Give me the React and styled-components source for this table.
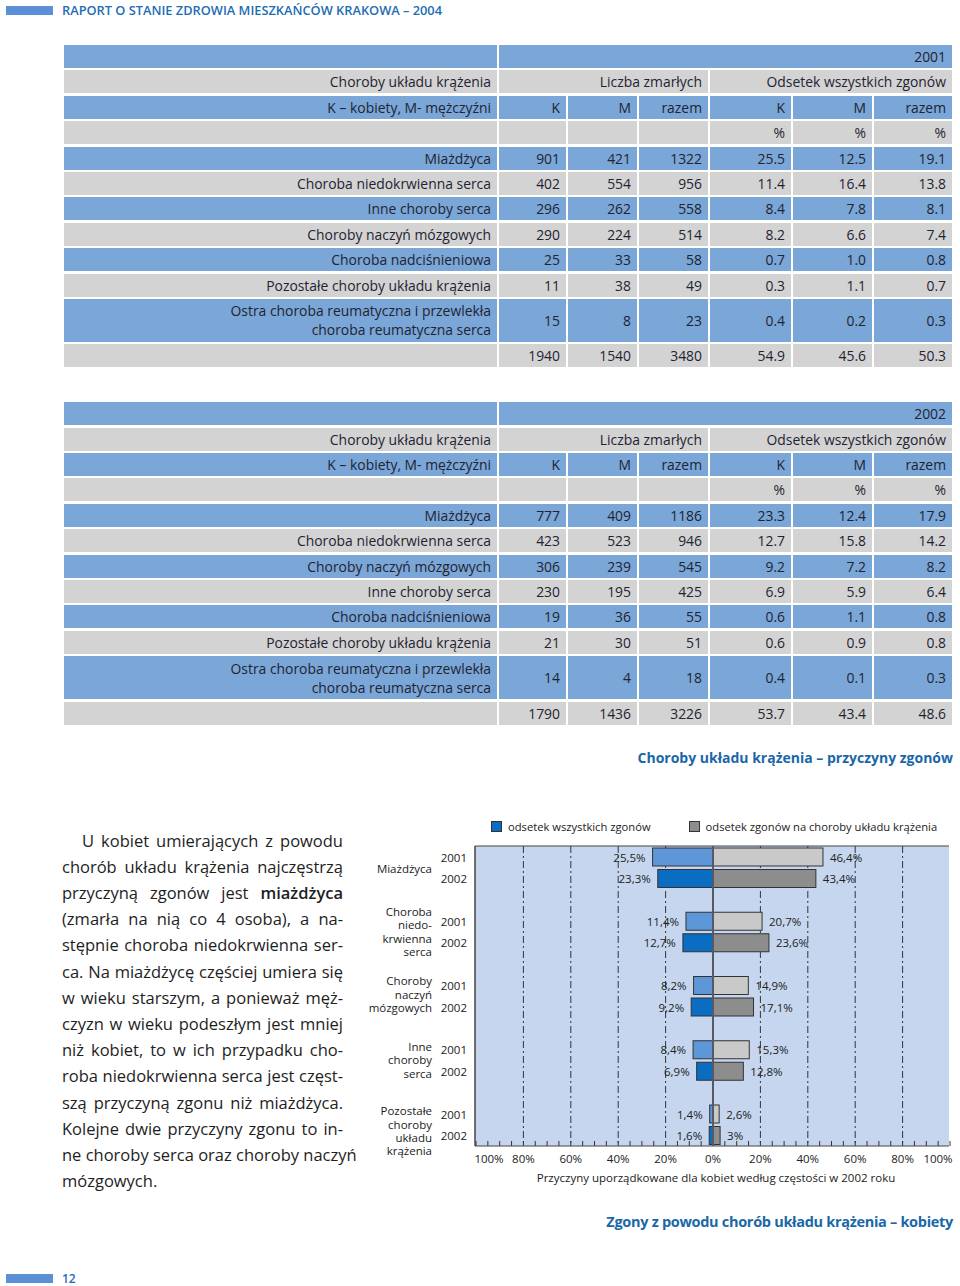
import React from "react";
import styled, { createGlobalStyle } from "styled-components";

const Global = createGlobalStyle`
  html, body { margin: 0; padding: 0; background: #fff; }
  body { font-family: "Open Sans", "Noto Sans", sans-serif; color: #222; }
`;

const Page = styled.div`
  width: 960px;
  height: 1286px;
  overflow: hidden;
  position: relative;
`;

const TopBar = styled.header`
  display: flex;
  align-items: center;
  height: 20px;
  gap: 9px;
  padding-left: 6px;
`;

const Stripe = styled.span`
  display: block;
  width: 47px;
  height: 9px;
  background: #5b8fd6;
`;

const TopTitle = styled.span`
  font-size: 12.8px;
  font-weight: 600;
  color: #1d6db3;
`;

const Grid = styled.div`
  display: grid;
  grid-template-columns: 433px 67px 69px 69px 81px 79px 78px;
  column-gap: 2px;
  row-gap: 2.4px;
  margin-left: 64px;
  width: 888px;
  margin-top: ${(p) => p.$top}px;
`;

const Cell = styled.div`
  background: ${(p) => (p.$tone === "blue" ? "#7ba6d8" : "#d3d3d4")};
  grid-column: ${(p) => (p.$span ? `span ${p.$span}` : "auto")};
  height: ${(p) => (p.$tall ? 43 : 23)}px;
  display: flex;
  align-items: center;
  justify-content: flex-end;
  text-align: right;
  padding-right: 6px;
  box-sizing: border-box;
  font-size: 13.9px;
  line-height: 19px;
  color: #1e2430;
  white-space: nowrap;
`;

const Caption = styled.div`
  text-align: right;
  width: 953px;
  font-size: 14px;
  font-weight: 700;
  color: #1a67a8;
  line-height: 20px;
  margin-top: ${(p) => p.$top}px;
`;

const FooterCaption = styled(Caption)`
  font-family: "Liberation Sans Narrow", "Open Sans", sans-serif;
  letter-spacing: -0.3px;
  font-size: 14.5px;
`;

const ChartSection = styled.section`
  display: flex;
  margin-top: 50px;
  height: 382px;
`;

const TextColumn = styled.div`
  margin-left: 62px;
  width: 281px;
  padding-top: 10px;
  font-size: 16.5px;
  line-height: 26.2px;
  color: #1e1e1e;
`;

const Line = styled.span`
  display: block;
  white-space: nowrap;
  text-align: ${(p) => (p.$last ? "left" : "justify")};
  text-align-last: ${(p) => (p.$last ? "left" : "justify")};
  padding-left: ${(p) => (p.$indent ? 20 : 0)}px;
  b { font-weight: 600; }
`;

const ChartColumn = styled.div`
  margin-left: 17px;
  width: 600px;
  display: flex;
  flex-direction: column;
`;

const Legend = styled.div`
  display: flex;
  align-items: center;
  height: 18px;
  padding-left: 131px;
  font-size: 11.2px;
  color: #222;
`;

const LegendItem = styled.div`
  display: flex;
  align-items: center;
  gap: 6px;
  margin-right: ${(p) => p.$gap || 0}px;
`;

const Swatch = styled.span`
  width: 9px;
  height: 9px;
  border: 1px solid #333;
  background: ${(p) => p.$color};
`;

const ChartSvg = styled.svg`
  display: block;
  font-family: "Open Sans", "Noto Sans", sans-serif;
`;

const AxisCaption = styled.div`
  margin-top: 4px;
  padding-left: 112px;
  text-align: center;
  font-size: 11.5px;
  line-height: 16px;
  color: #222;
`;

const PageFoot = styled.footer`
  display: flex;
  align-items: center;
  gap: 9px;
  padding-left: 6px;
  margin-top: 40px;
`;

const PageNum = styled.span`
  font-size: 12px;
  line-height: 14px;
  font-weight: 600;
  color: #1d6db3;
`;

const t1 = [
  ["Miażdżyca", "901", "421", "1322", "25.5", "12.5", "19.1"],
  ["Choroba niedokrwienna serca", "402", "554", "956", "11.4", "16.4", "13.8"],
  ["Inne choroby serca", "296", "262", "558", "8.4", "7.8", "8.1"],
  ["Choroby naczyń mózgowych", "290", "224", "514", "8.2", "6.6", "7.4"],
  ["Choroba nadciśnieniowa", "25", "33", "58", "0.7", "1.0", "0.8"],
  ["Pozostałe choroby układu krążenia", "11", "38", "49", "0.3", "1.1", "0.7"],
  ["OSTRA", "15", "8", "23", "0.4", "0.2", "0.3"],
  ["", "1940", "1540", "3480", "54.9", "45.6", "50.3"],
];
const t2 = [
  ["Miażdżyca", "777", "409", "1186", "23.3", "12.4", "17.9"],
  ["Choroba niedokrwienna serca", "423", "523", "946", "12.7", "15.8", "14.2"],
  ["Choroby naczyń mózgowych", "306", "239", "545", "9.2", "7.2", "8.2"],
  ["Inne choroby serca", "230", "195", "425", "6.9", "5.9", "6.4"],
  ["Choroba nadciśnieniowa", "19", "36", "55", "0.6", "1.1", "0.8"],
  ["Pozostałe choroby układu krążenia", "21", "30", "51", "0.6", "0.9", "0.8"],
  ["OSTRA", "14", "4", "18", "0.4", "0.1", "0.3"],
  ["", "1790", "1436", "3226", "53.7", "43.4", "48.6"],
];

function DataTable({ year, rows, top }) {
  const tone = (i) => (i % 2 === 0 ? "blue" : "gray");
  return (
    <Grid $top={top}>
      <Cell $tone="blue" />
      <Cell $tone="blue" $span={6}>{year}</Cell>

      <Cell $tone="gray">Choroby układu krążenia</Cell>
      <Cell $tone="gray" $span={3}>Liczba zmarłych</Cell>
      <Cell $tone="gray" $span={3}>Odsetek wszystkich zgonów</Cell>

      {["K – kobiety, M- mężczyźni", "K", "M", "razem", "K", "M", "razem"].map((v, i) => (
        <Cell key={"h" + i} $tone="blue">{v}</Cell>
      ))}
      {["", "", "", "", "%", "%", "%"].map((v, i) => (
        <Cell key={"p" + i} $tone="gray">{v}</Cell>
      ))}
      {rows.map((r, ri) =>
        r.map((v, ci) => {
          const tall = r[0] === "OSTRA";
          return (
            <Cell key={ri + "-" + ci} $tone={tone(ri)} $tall={tall}>
              {v === "OSTRA" ? (
                <span>
                  Ostra choroba reumatyczna i przewlekła
                  <br />
                  choroba reumatyczna serca
                </span>
              ) : (
                v
              )}
            </Cell>
          );
        })
      )}
    </Grid>
  );
}

const X0 = 353;
const S = 2.37;
const px = (v) => X0 + v * S;

const groups = [
  { label: ["Miażdżyca"], ly: [32], a: [25.5, 23.3], b: [46.4, 43.4] },
  { label: ["Choroba", "niedo-", "krwienna", "serca"], ly: [75, 88.5, 102, 115.5], a: [11.4, 12.7], b: [20.7, 23.6] },
  { label: ["Choroby", "naczyń", "mózgowych"], ly: [144, 158, 171], a: [8.2, 9.2], b: [14.9, 17.1] },
  { label: ["Inne", "choroby", "serca"], ly: [210, 223.5, 237], a: [8.4, 6.9], b: [15.3, 12.8] },
  { label: ["Pozostałe", "choroby", "układu", "krążenia"], ly: [274, 288, 301, 314], a: [1.4, 1.6], b: [2.6, 3] },
];

const fmt = (v) => String(v).replace(".", ",") + "%";

function Chart() {
  const ticks = [];
  for (let v = -100; v <= 100; v += 5) ticks.push(v);
  const grids = [-80, -60, -40, -20, 20, 40, 60, 80];
  const axis = [
    [-100, "100%", 129],
    [-80, "80%"],
    [-60, "60%"],
    [-40, "40%"],
    [-20, "20%"],
    [0, "0%"],
    [20, "20%"],
    [40, "40%"],
    [60, "60%"],
    [80, "80%"],
    [100, "100%", 578],
  ];
  const leftFill = ["#5e97d8", "#0b6dc1"];
  const rightFill = ["#c9c9c9", "#8d8d8d"];
  return (
    <ChartSvg width="600" height="330" viewBox="0 0 600 330">
      <rect x={115} y={10} width={474} height={300} fill="#c6d6ef" />
      {grids.map((g) => (
        <line key={g} x1={px(g)} x2={px(g)} y1={10} y2={310} stroke="#2f3440" strokeWidth="1" strokeDasharray="7 3 2 3" />
      ))}
      {ticks.map((v) => (
        <line key={"t" + v} x1={px(v)} x2={px(v)} y1={310} y2={305} stroke="#333" strokeWidth="1" />
      ))}
      <line x1={115} x2={589} y1={10} y2={10} stroke="#444" strokeWidth="1.2" />
      <line x1={115} x2={589} y1={310} y2={310} stroke="#444" strokeWidth="1.2" />
      <line x1={115} x2={115} y1={10} y2={310} stroke="#444" strokeWidth="1.5" />
      {groups.map((g, gi) => {
        const c0 = 21 + gi * 64.25;
        return (
          <g key={gi}>
            {g.label.map((l, li) => (
              <text key={li} x={72} y={g.ly[li]} textAnchor="end" dominantBaseline="central" fontSize="11.5" fill="#222">
                {l}
              </text>
            ))}
            {[0, 1].map((k) => {
              const c = c0 + k * 21.5;
              const a = g.a[k];
              const b = g.b[k];
              return (
                <g key={k}>
                  <text x={107} y={c} textAnchor="end" dominantBaseline="central" fontSize="11.5" fill="#222">
                    {k === 0 ? "2001" : "2002"}
                  </text>
                  <rect x={px(-a)} y={c - 9} width={a * S} height={18} fill={leftFill[k]} stroke="#333" strokeWidth="1" />
                  <rect x={X0} y={c - 9} width={b * S} height={18} fill={rightFill[k]} stroke="#333" strokeWidth="1" />
                  <text x={px(-a) - 7} y={c} textAnchor="end" dominantBaseline="central" fontSize="11.5" fill="#222">
                    {fmt(a)}
                  </text>
                  <text x={px(b) + 7} y={c} textAnchor="start" dominantBaseline="central" fontSize="11.5" fill="#222">
                    {fmt(b)}
                  </text>
                </g>
              );
            })}
          </g>
        );
      })}
      <line x1={X0} x2={X0} y1={10} y2={310} stroke="#555a66" strokeWidth="2" />
      {axis.map(([v, l, x]) => (
        <text key={v + l} x={x || px(v)} y={322} textAnchor="middle" dominantBaseline="central" fontSize="11.5" fill="#222">
          {l}
        </text>
      ))}
    </ChartSvg>
  );
}

const lines = [
  "U kobiet umierających z powodu",
  "chorób układu krążenia najczęstrzą",
  "BOLD",
  "(zmarła na nią co 4 osoba), a na-",
  "stępnie choroba niedokrwienna ser-",
  "ca. Na miażdżycę częściej umiera się",
  "w wieku starszym, a ponieważ męż-",
  "czyzn w wieku podeszłym jest mniej",
  "niż kobiet, to w ich przypadku cho-",
  "roba niedokrwienna serca jest częst-",
  "szą przyczyną zgonu niż miażdżyca.",
  "Kolejne dwie przyczyny zgonu to in-",
  "ne choroby serca oraz choroby naczyń",
  "mózgowych.",
];

export default function App() {
  return (
    <Page>
      <Global />
      <TopBar>
        <Stripe />
        <TopTitle>RAPORT O STANIE ZDROWIA MIESZKAŃCÓW KRAKOWA – 2004</TopTitle>
      </TopBar>
      <DataTable year="2001" rows={t1} top={25} />
      <DataTable year="2002" rows={t2} top={35} />
      <Caption $top={23}>Choroby układu krążenia – przyczyny zgonów</Caption>
      <ChartSection>
        <TextColumn>
          {lines.map((l, i) => (
            <Line key={i} $indent={i === 0} $last={i === lines.length - 1}>
              {l === "BOLD" ? (
                <>
                  przyczyną zgonów jest <b>miażdżyca</b>
                </>
              ) : (
                l
              )}
            </Line>
          ))}
        </TextColumn>
        <ChartColumn>
          <Legend>
            <LegendItem $gap={38}>
              <Swatch $color="#0b6dc1" />
              <span>odsetek wszystkich zgonów</span>
            </LegendItem>
            <LegendItem>
              <Swatch $color="#8d8d8d" />
              <span>odsetek zgonów na choroby układu krążenia</span>
            </LegendItem>
          </Legend>
          <Chart />
          <AxisCaption>Przyczyny uporządkowane dla kobiet według częstości w 2002 roku</AxisCaption>
        </ChartColumn>
      </ChartSection>
      <FooterCaption $top={12}>Zgony z powodu chorób układu krążenia – kobiety</FooterCaption>
      <PageFoot>
        <Stripe />
        <PageNum>12</PageNum>
      </PageFoot>
    </Page>
  );
}
